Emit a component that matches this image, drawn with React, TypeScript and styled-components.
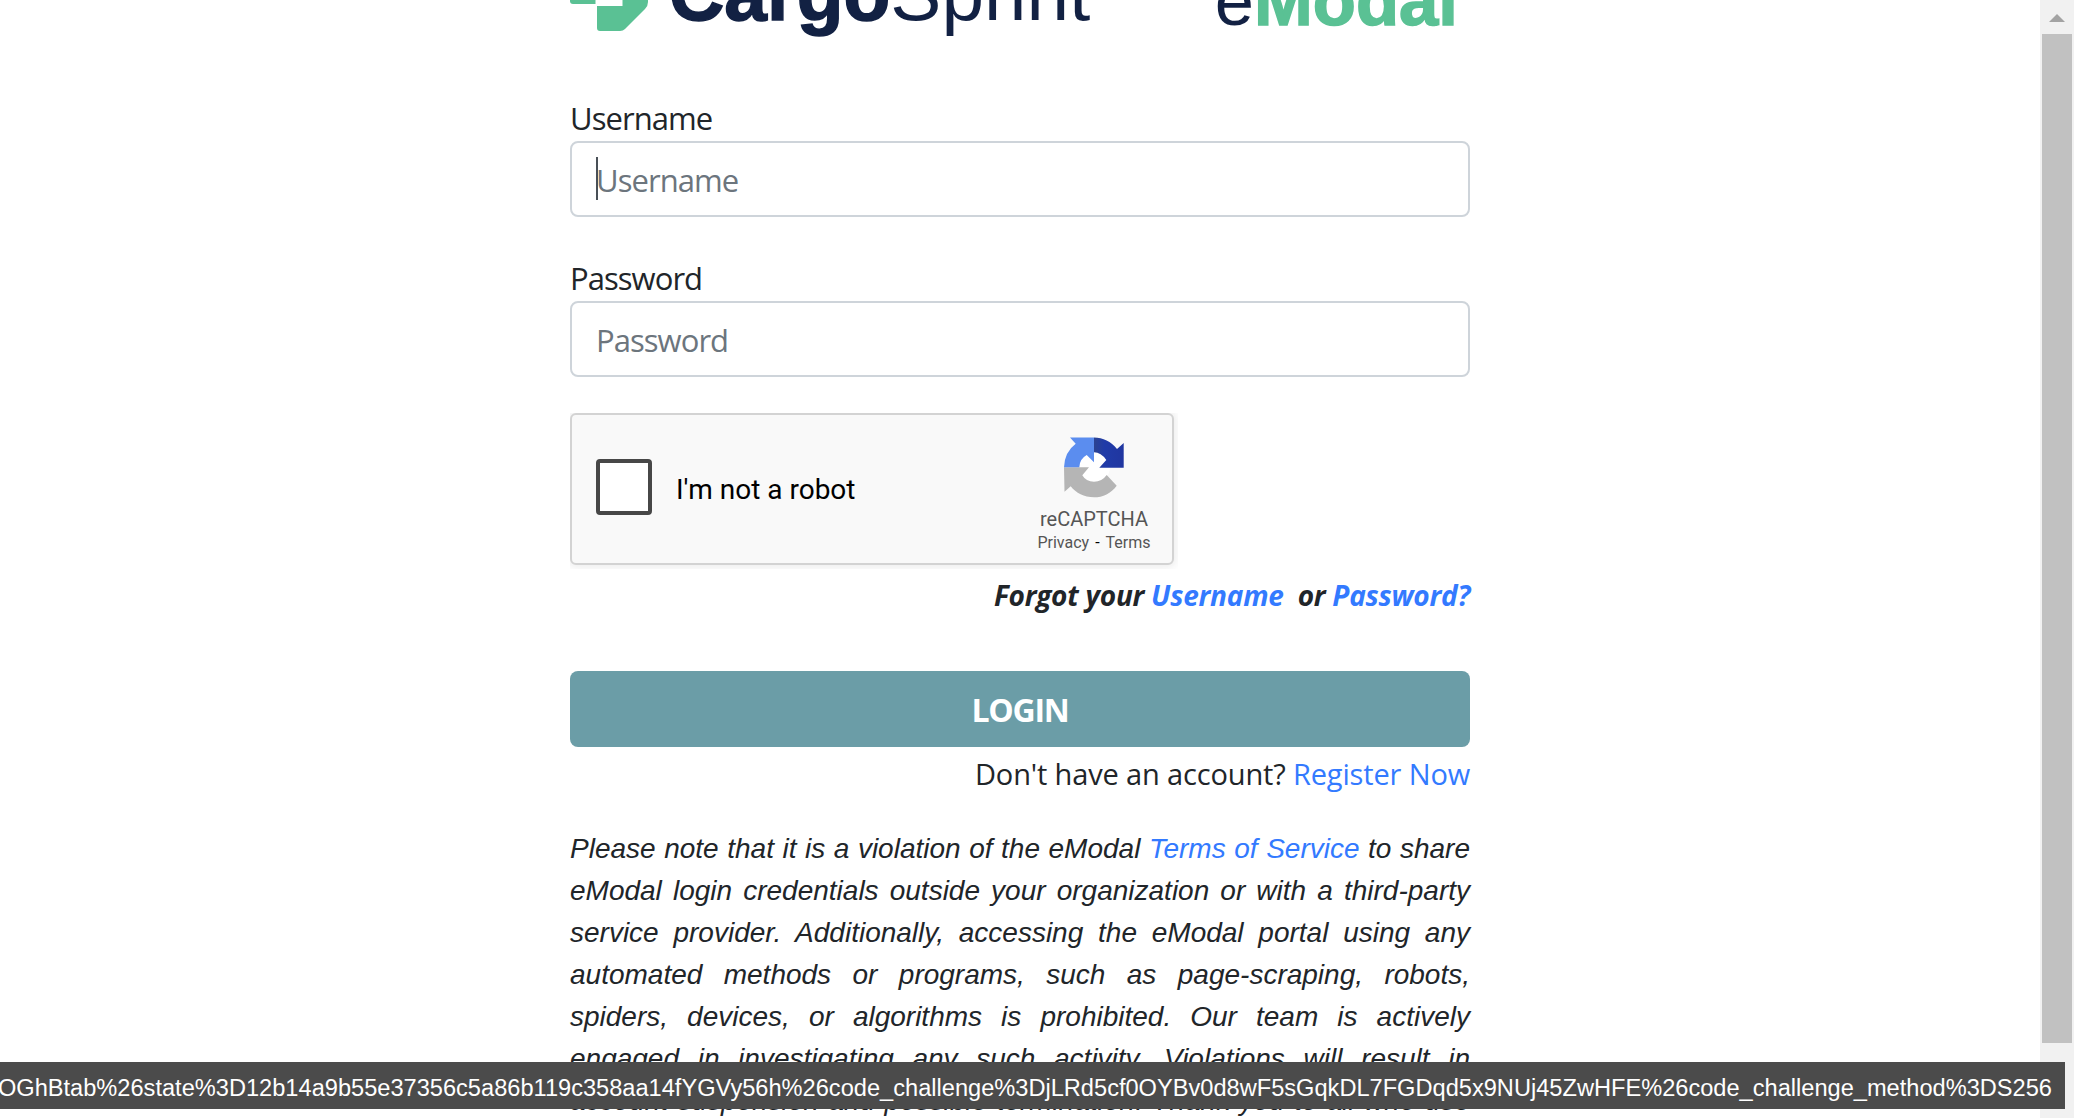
import React from 'react';
import styled, { createGlobalStyle } from 'styled-components';

const ui = `'Open Sans', 'Noto Sans', sans-serif`;
const arial = `'Liberation Sans', Arial, sans-serif`;

const Global = createGlobalStyle`
  * { box-sizing: border-box; }
  html, body { margin: 0; height: 100%; overflow: hidden; background: #fff; }
  body { font-family: ${ui}; color: #212529; }
`;

const Viewport = styled.div`
  display: flex;
  height: 100vh;
  overflow: hidden;
`;
const Content = styled.main`
  flex: 1;
  display: flex;
  justify-content: center;
  align-items: flex-start;
  overflow: hidden;
`;
const Form = styled.form`
  width: 900px;
  display: flex;
  flex-direction: column;
`;
const Logos = styled.header`
  display: flex;
  justify-content: space-between;
  height: 98px;
  margin-top: -56px;
  margin-bottom: 55px;
  flex: none;
`;
const Brand = styled.div`
  display: flex;
  align-items: flex-start;
`;
const Mark = styled.svg`
  width: 80px;
  height: 88px;
  margin-right: 19px;
  flex: none;
`;
const Wordmark = styled.div<{ $size: number; $top: number }>`
  font: 400 ${p => p.$size}px/80px ${arial};
  margin-top: ${p => p.$top}px;
  color: #122143;
  white-space: nowrap;
`;
const Strong = styled.b<{ $color: string }>`
  color: ${p => p.$color};
  -webkit-text-stroke: 1.5px ${p => p.$color};
`;
const Product = styled.div`
  margin-right: 12px;
`;
const Label = styled.label`
  font-size: 31px;
  line-height: 43px;
  height: 44px;
  white-space: pre;
  letter-spacing: -0.95px;
`;
const Field = styled.div`
  display: flex;
  align-items: center;
  height: 76px;
  border: 2px solid #ced4da;
  border-radius: 8px;
  padding: 2px 24px 0;
  margin-bottom: 40px;
  color: #6c757d;
  font-size: 31px;
  letter-spacing: -0.95px;
`;
const Caret = styled.span`
  width: 2px;
  height: 43px;
  margin: -4px -2px 0 0;
  background: #495057;
`;
const Captcha = styled.section`
  display: flex;
  align-items: center;
  width: 604px;
  height: 152px;
  margin-top: -4px;
  padding-left: 24px;
  background: #f9f9f9;
  border: 2px solid #d3d3d3;
  border-radius: 6px;
  box-shadow: 0 0 8px 2px rgba(0, 0, 0, 0.08);
  clip-path: inset(0 -4px -4px 0);
  font-family: Roboto, sans-serif;
`;
const Check = styled.span`
  width: 56px;
  height: 56px;
  margin-top: -4px;
  border: 4px solid #474747;
  border-radius: 4px;
  background: #fff;
`;
const Robot = styled.span`
  flex: 1;
  margin-left: 24px;
  padding-top: 2px;
  color: #000;
  font-size: 28px;
  line-height: 34px;
`;
const Badge = styled.div`
  width: 120px;
  margin-right: 18px;
  height: 100%;
  padding-top: 22px;
  display: flex;
  flex-direction: column;
  align-items: center;
  color: #555;
`;
const RecaptchaIcon = styled.svg`
  width: 60px;
  height: 62px;
  flex: none;
`;
const BadgeTitle = styled.div`
  font-size: 20px;
  line-height: 20px;
  margin-top: 10px;
`;
const BadgeLinks = styled.div`
  display: flex;
  gap: 6px;
  font-size: 16px;
  line-height: 20px;
  margin-top: 4px;
`;
const Dash = styled.span`
  color: #000;
`;
const Link = styled.a`
  color: #337aff;
  text-decoration: none;
`;
const Forgot = styled.div`
  height: 60px;
  line-height: 60px;
  text-align: right;
  font-size: 28px;
  font-weight: 700;
  font-style: italic;
  white-space: pre;
  letter-spacing: -0.25px;
`;
const Login = styled.button`
  height: 76px;
  margin-top: 46px;
  border: 0;
  border-radius: 8px;
  background: #6b9da7;
  color: #fff;
  font: 700 32px ${ui};
  padding: 0;
  letter-spacing: -1.3px;
`;
const Register = styled.div`
  height: 56px;
  line-height: 54px;
  text-align: right;
  font-size: 29px;
  white-space: pre;
  letter-spacing: -0.15px;
`;
const Notice = styled.p`
  margin: 25px 0 0;
  font: italic 28px/42px ${arial};
  text-align: justify;
`;
const Scrollbar = styled.aside`
  width: 34px;
  background: #f1f1f1;
  display: flex;
  flex-direction: column;
  align-items: center;
`;
const Arrow = styled.svg`
  width: 34px;
  height: 34px;
  flex: none;
`;
const Thumb = styled.div`
  width: 30px;
  height: 1009px;
  background: #c1c1c1;
`;
const Status = styled.div`
  position: fixed;
  left: 0;
  bottom: 9px;
  width: 2065px;
  height: 47px;
  display: flex;
  justify-content: flex-end;
  overflow: hidden;
  padding-right: 13px;
  background: #4b4b4b;
  color: #fff;
  font: 23.62px/52px ${arial};
  white-space: nowrap;
`;

export default function App() {
  return (
    <>
      <Global />
      <Viewport>
        <Content>
          <Form>
            <Logos>
              <Brand>
                <Mark viewBox="0 0 80 88">
                  <path d="M0 30H25.5V60H3Q0 60 0 57Z" fill="#5ac194" />
                  <path d="M52.5 30H78V58Q78 62 75 65L55 85Q53 87 50 87H30Q27 87 27 84V62H52.5Z" fill="#5ac194" />
                </Mark>
                <Wordmark $size={76.6} $top={10}>
                  <Strong $color="#122143">Cargo</Strong>Sprint
                </Wordmark>
              </Brand>
              <Product>
                <Wordmark $size={70.6} $top={17}>
                  e<Strong $color="#5ac194">Modal</Strong>
                </Wordmark>
              </Product>
            </Logos>
            <Label>Username</Label>
            <Field><Caret />Username</Field>
            <Label>Password</Label>
            <Field>Password</Field>
            <Captcha>
              <Check />
              <Robot>I'm not a robot</Robot>
              <Badge>
                <RecaptchaIcon viewBox="0 0 60 62">
                  <defs>
                    <linearGradient id="navy" x1="0" x2="1">
                      <stop offset="0" stopColor="#2c4390" />
                      <stop offset="0.35" stopColor="#203ba8" />
                      <stop offset="1" stopColor="#2036a0" />
                    </linearGradient>
                  </defs>
                  <circle cx="30" cy="30" r="16" fill="#fff" />
                  <path fill="#b5b5b5" d="M0 30.3H25L18.3 38.3Q22 44.7 30 44.7Q38 44.7 42.7 38L52.7 48.7C47 56.5 39 60.3 30 60.3C20 60.3 12 56 6.7 49.3L.5 54.7Z" />
                  <path fill="url(#navy)" d="M30 .5C39 .5 47 4.5 53 12L59.7 6V30.7H35.3L42.3 23Q37 15.3 30 15.3Z" />
                  <path fill="#5b8def" d="M6 .5H30V25.3L22.7 18Q15.5 22 15.3 30.3H0Q.5 15 11.7 6.7Z" />
                </RecaptchaIcon>
                <BadgeTitle>reCAPTCHA</BadgeTitle>
                <BadgeLinks><span>Privacy</span><Dash>-</Dash><span>Terms</span></BadgeLinks>
              </Badge>
            </Captcha>
            <Forgot>Forgot your <Link>Username</Link>  or <Link>Password?</Link></Forgot>
            <Login type="button">LOGIN</Login>
            <Register>Don't have an account? <Link>Register Now</Link></Register>
            <Notice>
              Please note that it is a violation of the eModal <Link>Terms of Service</Link> to share eModal login
              credentials outside your organization or with a third-party service provider. Additionally, accessing the
              eModal portal using any automated methods or programs, such as page-scraping, robots, spiders, devices, or
              algorithms is prohibited. Our team is actively engaged in investigating any such activity. Violations will
              result in account suspension and possible termination. Thank you to all who use
              the portal responsibly.
            </Notice>
          </Form>
        </Content>
        <Scrollbar>
          <Arrow viewBox="0 0 34 34"><path d="M9 22L17 14L25 22Z" fill="#a3a3a3" /></Arrow>
          <Thumb />
        </Scrollbar>
      </Viewport>
      <Status>
        OGhBtab%26state%3D12b14a9b55e37356c5a86b119c358aa14fYGVy56h%26code_challenge%3DjLRd5cf0OYBv0d8wF5sGqkDL7FGDqd5x9NUj45ZwHFE%26code_challenge_method%3DS256
      </Status>
    </>
  );
}
